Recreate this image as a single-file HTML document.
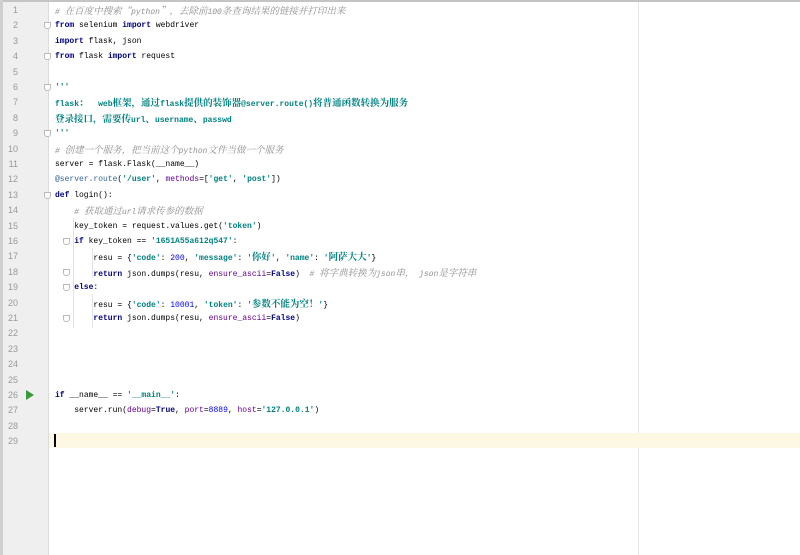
<!DOCTYPE html>
<html><head><meta charset="utf-8"><style>
html,body{margin:0;padding:0;width:800px;height:555px;overflow:hidden;background:#fff;position:relative}
.top{position:absolute;left:0;top:0;width:800px;height:2px;background:#c4c4c4}
.lb{position:absolute;left:0;top:0;width:3px;height:555px;background:#cfcfcf}
.gut{position:absolute;left:3px;top:2px;width:45px;height:553px;background:#efefef}
.sep{position:absolute;left:48px;top:2px;width:1px;height:553px;background:#dcdcdc}
.mar{position:absolute;left:638px;top:2px;width:1px;height:553px;background:#e6e6e6}
.cur{position:absolute;left:49px;top:433px;width:751px;height:15px;background:#fdf8e4}
.caret{position:absolute;left:54px;top:434px;width:2px;height:13px;background:#000}
.n{position:absolute;left:2px;width:16px;text-align:right;font:9px "Liberation Sans",sans-serif;color:#999;}
.l{position:absolute;left:55px;height:15px;white-space:pre;font:8px/15px "Liberation Mono","Noto Serif CJK SC",monospace;color:#000}
.z{font-family:"Noto Serif CJK SC",serif;font-size:9.5px;line-height:8px;}
.k{color:#000080;font-weight:bold}
.s{color:#008080;font-weight:bold}
.c{color:#909090;font-style:italic}
.d{color:#008080;font-weight:bold}
.num{color:#0000ff}
.p{color:#660099}
.dec{color:#336699}
.f{position:absolute;left:44px;width:7px;height:7px;border:1px solid #bbb;background:#fff;box-sizing:border-box;border-radius:0 0 3px 3px}
.run{position:absolute;left:26px;top:390px;width:0;height:0;border-left:8px solid #3a9a3a;border-top:5px solid transparent;border-bottom:5px solid transparent}
.vl{position:absolute;width:1px;background:#e3e3e3}
</style></head><body>
<div class="top"></div><div class="lb"></div><div class="gut"></div><div class="sep"></div><div class="mar"></div>
<div class="cur"></div>
<div class="vl" style="left:73px;top:218px;height:110px"></div>
<div class="vl" style="left:92px;top:248px;height:30px"></div>
<div class="vl" style="left:92px;top:294px;height:34px"></div>
<div class="run"></div>
<div id="nums"></div>
<div class="f" style="top:22px"></div><div class="f" style="top:53px"></div><div class="f" style="top:84px"></div><div class="f" style="top:130px"></div><div class="f" style="top:192px"></div>
<div class="f" style="top:238px;left:63px"></div><div class="f" style="top:269px;left:63px"></div><div class="f" style="top:284px;left:63px"></div><div class="f" style="top:315px;left:63px"></div>
<div class="caret"></div>
<script>
var h='';for(var i=1;i<=29;i++){h+='<div class="n" style="top:'+(3+(i-1)*15.4+2)+'px">'+i+'</div>';}
document.getElementById('nums').innerHTML=h;
</script>
<div class="l" style="top:5px"><span class="c"># <span class="z">在百度中搜索“</span>python<span class="z">”，去除前</span>100<span class="z">条查询结果的链接并打印出来</span></span></div>
<div class="l" style="top:18px"><span class="k">from</span> selenium <span class="k">import</span> webdriver</div>
<div class="l" style="top:34px"><span class="k">import</span> flask, json</div>
<div class="l" style="top:49px"><span class="k">from</span> flask <span class="k">import</span> request</div>
<div class="l" style="top:80px"><span class="d">'''</span></div>
<div class="l" style="top:97px"><span class="d">flask<span class="z">：</span>  web<span class="z">框架，通过</span>flask<span class="z">提供的装饰器</span>@server.route()<span class="z">将普通函数转换为服务</span></span></div>
<div class="l" style="top:113px"><span class="d"><span class="z">登录接口，需要传</span>url<span class="z">、</span>username<span class="z">、</span>passwd</span></div>
<div class="l" style="top:126px"><span class="d">'''</span></div>
<div class="l" style="top:144px"><span class="c"># <span class="z">创建一个服务，把当前这个</span>python<span class="z">文件当做一个服务</span></span></div>
<div class="l" style="top:157px">server = flask.Flask(__name__)</div>
<div class="l" style="top:172px"><span class="dec">@server.route</span>(<span class="s">'/user'</span>, <span class="p">methods</span>=[<span class="s">'get'</span>, <span class="s">'post'</span>])</div>
<div class="l" style="top:188px"><span class="k">def</span> login():</div>
<div class="l" style="top:205px">    <span class="c"># <span class="z">获取通过</span>url<span class="z">请求传参的数据</span></span></div>
<div class="l" style="top:219px">    key_token = request.values.get(<span class="s">'token'</span>)</div>
<div class="l" style="top:234px">    <span class="k">if</span> key_token == <span class="s">'1651A55a612q547'</span>:</div>
<div class="l" style="top:251px">        resu = {<span class="s">'code'</span>: <span class="num">200</span>, <span class="s">'message'</span>: <span class="s">'<span class="z">你好</span>'</span>, <span class="s">'name'</span>: <span class="s">'<span class="z">阿萨大大</span>'</span>}</div>
<div class="l" style="top:267px">        <span class="k">return</span> json.dumps(resu, <span class="p">ensure_ascii</span>=<span class="k">False</span>)  <span class="c"># <span class="z">将字典转换为</span>json<span class="z">串，</span> json<span class="z">是字符串</span></span></div>
<div class="l" style="top:280px">    <span class="k">else</span>:</div>
<div class="l" style="top:298px">        resu = {<span class="s">'code'</span>: <span class="num">10001</span>, <span class="s">'token'</span>: <span class="s">'<span class="z">参数不能为空！</span>'</span>}</div>
<div class="l" style="top:311px">        <span class="k">return</span> json.dumps(resu, <span class="p">ensure_ascii</span>=<span class="k">False</span>)</div>
<div class="l" style="top:388px"><span class="k">if</span> __name__ == <span class="s">'__main__'</span>:</div>
<div class="l" style="top:403px">    server.run(<span class="p">debug</span>=<span class="k">True</span>, <span class="p">port</span>=<span class="num">8889</span>, <span class="p">host</span>=<span class="s">'127.0.0.1'</span>)</div>
</body></html>
